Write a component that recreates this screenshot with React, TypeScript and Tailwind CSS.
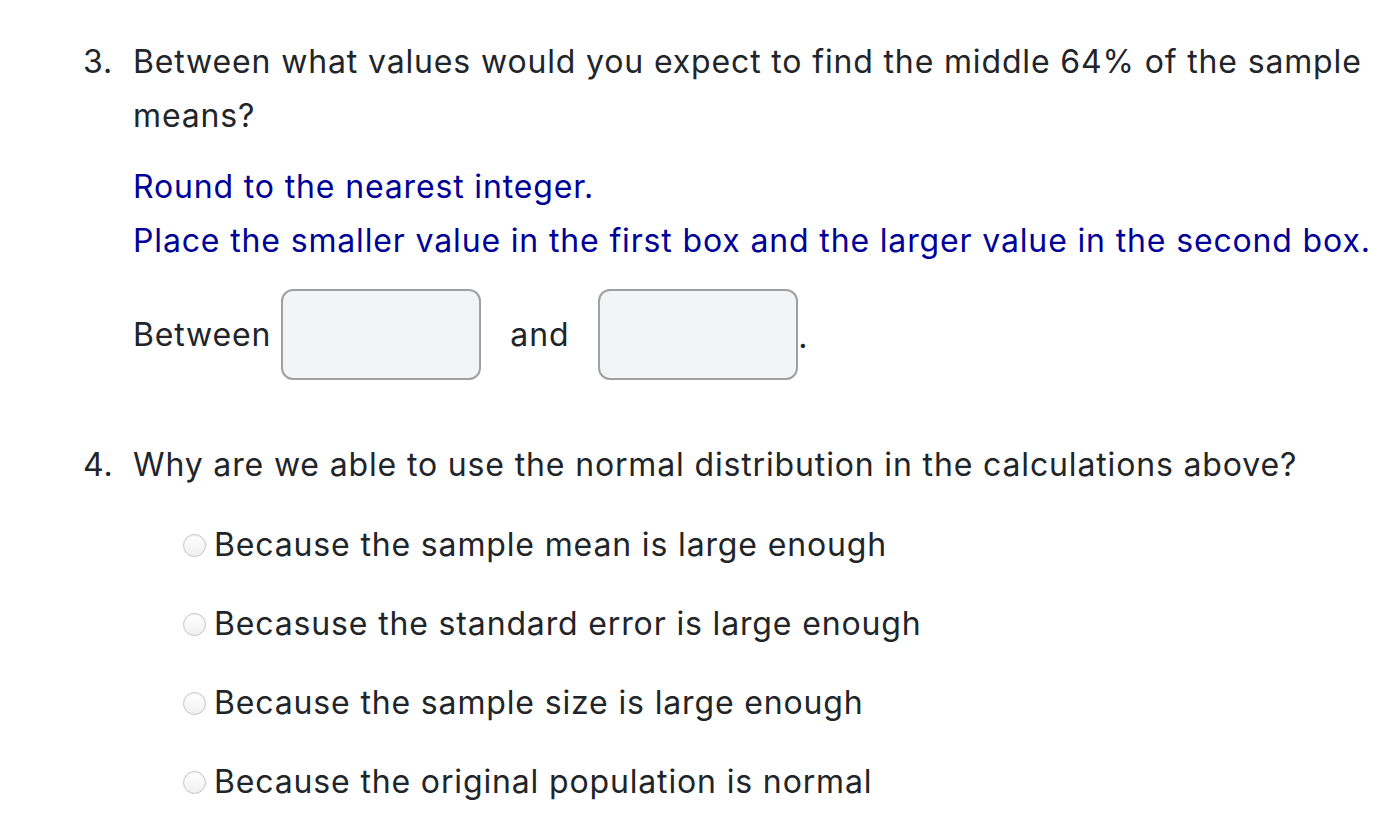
const options = [
  'Because the sample mean is large enough',
  'Becasuse the standard error is large enough',
  'Because the sample size is large enough',
  'Because the original population is normal',
];

function Radio() {
  return (
    <span className="mr-[8px] inline-block h-[23px] w-[23px] shrink-0 rounded-full border border-[#c4c4c4] bg-gradient-to-b from-white to-[#f0f0f0] shadow-[inset_0_1px_1px_rgba(0,0,0,0.05)]" />
  );
}

export default function App() {
  return (
    <div
      className="min-h-screen bg-white pl-[83px] pt-[35px] text-[32px] leading-[54px] tracking-[0.85px] text-[#212529]"
      style={{ fontFamily: 'Inter, "Liberation Sans", sans-serif' }}
    >
      <div className="flex">
        <span className="w-[50px] shrink-0">3.</span>
        <div className="flex-1">
          <p>Between what values would you expect to find the middle 64% of the sample means?</p>
          <div className="mt-[17px] text-[#000099]">
            <p>Round to the nearest integer.</p>
            <p>Place the smaller value in the first box and the larger value in the second box.</p>
          </div>
          <div className="mt-[21px] flex items-center">
            <span>Between</span>
            <input
              type="text"
              className="ml-[10px] h-[91px] w-[200px] rounded-[12px] border-2 border-[#a0a0a0] bg-[#f3f4f6] outline-none"
            />
            <span className="ml-[29px] mr-[29px]">and</span>
            <input
              type="text"
              className="h-[91px] w-[200px] rounded-[12px] border-2 border-[#a0a0a0] bg-[#f3f4f6] outline-none"
            />
            <span className="translate-y-[2px]">.</span>
          </div>
        </div>
      </div>

      <div className="mt-[58px] flex">
        <span className="w-[50px] shrink-0">4.</span>
        <div className="flex-1">
          <p>Why are we able to use the normal distribution in the calculations above?</p>
          <div className="ml-[50px] mt-[26px] flex flex-col gap-[25px]">
            {options.map((o) => (
              <label key={o} className="flex items-center">
                <Radio />
                <span>{o}</span>
              </label>
            ))}
          </div>
        </div>
      </div>
    </div>
  );
}
